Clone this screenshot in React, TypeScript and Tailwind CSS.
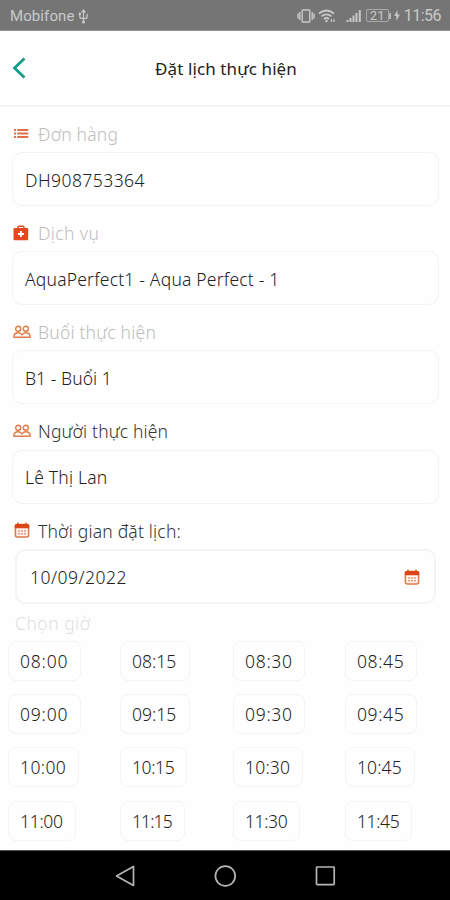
import type { ReactNode } from "react";
import clsx from "clsx";

const SLOTS = [
  { time: "08:00", box: "w-[73px]", text: "tracking-[0.8px]" },
  { time: "08:15", box: "w-[70px]", text: "tracking-[0px]" },
  { time: "08:30", box: "w-[72px]", text: "tracking-[0.7px]" },
  { time: "08:45", box: "w-[72px]", text: "tracking-[0.6px]" },
  { time: "09:00", box: "w-[73px]", text: "tracking-[0.8px]" },
  { time: "09:15", box: "w-[70px]", text: "tracking-[0px]" },
  { time: "09:30", box: "w-[72px]", text: "tracking-[0.7px]" },
  { time: "09:45", box: "w-[72px]", text: "tracking-[0.6px]" },
  { time: "10:00", box: "w-[71px]", text: "tracking-[0.4px]" },
  { time: "10:15", box: "w-[67px]", text: "tracking-[-0.4px]" },
  { time: "10:30", box: "w-[70px]", text: "tracking-[0.2px]" },
  { time: "10:45", box: "w-[70px]", text: "tracking-[0.1px]" },
  { time: "11:00", box: "w-[68px]", text: "tracking-[-0.3px]" },
  { time: "11:15", box: "w-[65px]", text: "tracking-[-0.9px]" },
  { time: "11:30", box: "w-[67px]", text: "tracking-[-0.4px]" },
  { time: "11:45", box: "w-[67px]", text: "tracking-[-0.4px]" },
];

function ListIcon() {
  return (
    <svg viewBox="0 0 16 16" className="size-4 text-[#df7047]" fill="none" stroke="currentColor" strokeWidth="1.9">
      <path d="M1 4h2M4.2 4H15.300M1 7.500h2M4.200 7.500H15.300M1 11h2M4.200 11H15.300" />
    </svg>
  );
}

function MedkitIcon() {
  return (
    <svg viewBox="0 0 16 16" className="size-4">
      <path d="M5 4V2.2Q5 1.3 6 1.3h4q1 0 1 .9V4" fill="none" stroke="#e6471c" strokeWidth="1.4" />
      <rect x=".5" y="3" width="14.7" height="12.2" rx="1.2" fill="#e6471c" />
      <path d="M7.9 6v6M4.9 9h6" stroke="#fff" strokeWidth="1.9" />
    </svg>
  );
}

function PeopleIcon() {
  return (
    <svg viewBox="0 0 18 14" className="h-3.5 w-[18px] text-[#e27b48]" fill="none" stroke="currentColor" strokeWidth="1.4" strokeLinejoin="round">
      <circle cx="5.2" cy="3.8" r="2.5" />
      <circle cx="12.8" cy="3.8" r="2.5" />
      <path d="M.8 12.200c0-3 1.800-4.400 4.400-4.400 1.800 0 3.100.7 3.800 2.200.7-1.500 2-2.200 3.800-2.200 2.600 0 4.400 1.400 4.400 4.400H.8Z" />
    </svg>
  );
}

function CalendarIcon() {
  return (
    <svg viewBox="0 0 16 16" className="size-4">
      <path d="M4 .8v3M12 .8v3" stroke="#d9541e" strokeWidth="1.7" />
      <rect x="1.4" y="2.5" width="13.2" height="12.5" rx="2" fill="#fff3ec" stroke="#df7848" strokeWidth="1.5" />
      <path d="M.8 6.300V3.600Q.8 1.900 2.500 1.900h11q1.700 0 1.700 1.700v2.700Z" fill="#dc4515" />
      <path d="M4 8.900h2M7 8.900h2M10 8.900h2M4 11.700h2M7 11.700h2M10 11.700h2" stroke="#e39a78" strokeWidth="1.5" />
    </svg>
  );
}

type FieldProps = {
  icon: ReactNode;
  label: string;
  value: string;
  muted?: boolean;
  labelClass: string;
  valueClass: string;
};

function Field({ icon, label, value, muted, labelClass, valueClass }: FieldProps) {
  return (
    <div className="h-[99.2px] pr-[11px] pl-3">
      <div className="flex h-[34px] items-center pt-0.5">
        <span className="flex w-[26px] shrink-0 items-center pb-px pl-px">{icon}</span>
        <span className={clsx("whitespace-nowrap", muted ? "text-[#bdbdbd]" : "text-[#333]", labelClass)}>
          {label}
        </span>
      </div>
      <div className="mt-0.5 flex h-[54px] items-center rounded-[10px] border border-[#f3f3f3] px-3 pt-0.5">
        <span className={clsx("whitespace-nowrap", valueClass)}>{value}</span>
      </div>
    </div>
  );
}

function StatusBar() {
  return (
    <header className="flex h-[31px] shrink-0 items-center justify-between border-b border-[#8f8f8f] bg-[#757575] pr-[9px] pl-2.5 font-['Roboto',sans-serif] font-normal text-[#c9c9c9]">
      <div className="flex items-center gap-[3px] pt-0.5">
        <span className="text-[15px] tracking-[0.1px]">Mobifone</span>
        <svg viewBox="0 0 12 16" className="h-[15px] w-[11px]" fill="none" stroke="currentColor" strokeWidth="1.3">
          <path d="M6 2v13M2 5v3.5Q2 10 3.5 10h5Q10 10 10 8.5V5" />
          <path d="m4.5 3 1.5-2 1.5 2Z" fill="currentColor" />
          <circle cx="2" cy="5" r=".8" fill="currentColor" />
          <circle cx="6" cy="14" r="1" fill="currentColor" />
        </svg>
      </div>
      <div className="flex items-center pt-px">
        <svg viewBox="0 0 18 16" className="h-4 w-[18px]" fill="none" stroke="currentColor" strokeWidth="1.4">
          <rect x="5.200" y="2" width="7.600" height="12" rx=".6" />
          <path d="M2.800 4v8M15.200 4v8M1 5.500v5M17 5.500v5" />
        </svg>
        <svg viewBox="0 0 18 16" className="ml-[3px] h-4 w-[18px]" fill="none" stroke="currentColor" strokeWidth="1.7">
          <path d="M1 5.500q7.500-6 15 0M3.500 8.300q5-4 10 0M6 11q2.500-2 5 0" />
          <circle cx="8.500" cy="13" r="1.200" fill="currentColor" stroke="none" />
          <path d="M13.500 11v3M16 11v3" strokeWidth="1.2" />
        </svg>
        <svg viewBox="0 0 16 16" className="ml-2.5 size-4" stroke="currentColor" strokeWidth="2">
          <path d="M1.500 14v-2M4.500 14v-4M7.500 14V7.500M10.500 14V5M13.800 14V2" />
        </svg>
        <div className="ml-1 flex h-[13px] w-[23px] items-center justify-center rounded-[2px] border border-[#a8a8a8] text-[13px]">21</div>
        <div className="h-1.5 w-0.5 bg-[#b5b5b5]" />
        <svg viewBox="0 0 6 12" className="ml-[3px] h-[11px] w-1.5" fill="currentColor">
          <path d="M3.500 0 0 6.500h2.300V12L6 5H3.600Z" />
        </svg>
        <span className="ml-1 text-[16px] tracking-[-0.5px]">11:56</span>
      </div>
    </header>
  );
}

function TitleBar() {
  return (
    <div className="flex h-[76px] shrink-0 items-center border-b-2 border-[#f4f4f4] px-3">
      <svg viewBox="0 0 14 22" className="h-[22px] w-3.5 shrink-0" fill="none" stroke="#139b8b" strokeWidth="2.8">
        <path d="M12.500 1.500 2.500 11l10 9.500" />
      </svg>
      <h1 className="flex-1 pt-0.5 pr-3 text-center text-[17px] font-normal tracking-[0.1px] text-[#222]">
        Đặt lịch thực hiện
      </h1>
    </div>
  );
}

function NavBar() {
  return (
    <nav className="flex h-[50px] shrink-0 items-center justify-center gap-[76px] border-t border-[#555] bg-black text-[#b5b5b5]">
      <svg viewBox="0 0 24 24" className="size-6" fill="none" stroke="currentColor" strokeWidth="1.7" strokeLinejoin="round">
        <path d="M20.500 2.500v19L3.500 12Z" />
      </svg>
      <svg viewBox="0 0 24 24" className="size-6" fill="none" stroke="currentColor" strokeWidth="1.7">
        <circle cx="12.300" cy="12" r="9.900" />
      </svg>
      <svg viewBox="0 0 24 24" className="size-6" fill="none" stroke="currentColor" strokeWidth="1.7">
        <rect x="3.500" y="3" width="17.700" height="17.700" rx=".6" />
      </svg>
    </nav>
  );
}

export default function App() {
  return (
    <div className="flex h-[900px] w-[450px] flex-col overflow-hidden bg-[#fefefe] font-['Noto_Sans','Open_Sans',sans-serif] text-[17.5px] font-light text-[#222]">
      <StatusBar />
      <TitleBar />
      <main className="min-h-0 flex-1 pt-[9px]">
        <Field icon={<ListIcon />} label="Đơn hàng" value="DH908753364" muted labelClass="tracking-[0.2px]" valueClass="tracking-[0.45px]" />
        <Field icon={<MedkitIcon />} label="Dịch vụ" value="AquaPerfect1 - Aqua Perfect - 1" muted labelClass="tracking-[0.4px]" valueClass="tracking-[0.2px]" />
        <Field icon={<PeopleIcon />} label="Buổi thực hiện" value="B1 - Buổi 1" muted labelClass="tracking-[0.2px]" valueClass="tracking-[0.05px]" />
        <Field icon={<PeopleIcon />} label="Người thực hiện" value="Lê Thị Lan" labelClass="tracking-[0.15px]" valueClass="tracking-[0.2px]" />

        <div className="flex h-[34px] items-center px-3 pt-0.5">
          <span className="w-[26px] shrink-0 pb-0.5 pl-0.5"><CalendarIcon /></span>
          <span className="tracking-[0.2px] text-[#333]">Thời gian đặt lịch:</span>
        </div>
        <div className="mx-[15px] mt-0.5 flex h-[55px] w-[421px] items-center justify-between rounded-[10px] border-2 border-[#f4f4f4] pt-px pr-[14px] pl-[13px]">
          <span className="tracking-[0.5px]">10/09/2022</span>
          <CalendarIcon />
        </div>
        <p className="mt-[6px] h-[27px] px-[15px] text-[17.5px] leading-[27px] tracking-[0.5px] text-[#dedede]">Chọn giờ</p>

        <div className="mt-1 grid grid-cols-[112px_113px_112px_100px] gap-y-[13.3px] pl-2">
          {SLOTS.map((slot) => (
            <button
              key={slot.time}
              className={clsx("flex h-10 items-center rounded-lg border border-[#f4f4f4] pl-[11px] whitespace-nowrap", slot.box, slot.text)}
            >
              {slot.time}
            </button>
          ))}
        </div>
      </main>
      <NavBar />
    </div>
  );
}
